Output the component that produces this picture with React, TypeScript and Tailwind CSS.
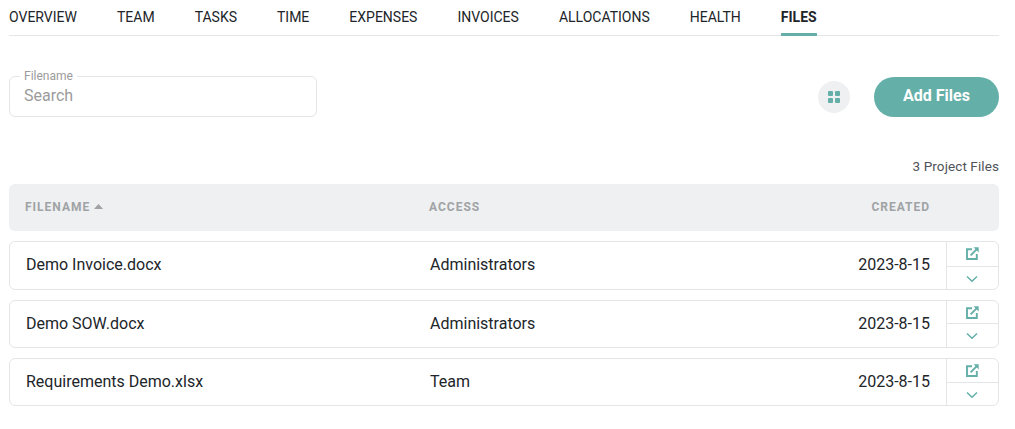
import React from "react";

const tabs = ["OVERVIEW", "TEAM", "TASKS", "TIME", "EXPENSES", "INVOICES", "ALLOCATIONS", "HEALTH", "FILES"];
const rows = [
  { name: "Demo Invoice.docx", access: "Administrators", h: "h-[49px]", top: "h-[25px] pb-[1px]", text: "pb-[1px]" },
  { name: "Demo SOW.docx", access: "Administrators", h: "h-[48px]", top: "h-[23px]", text: "" },
  { name: "Requirements Demo.xlsx", access: "Team", h: "h-[48px]", top: "h-[24px] pb-[1px]", text: "" },
];

function OpenIcon() {
  return (
    <svg width="13" height="13" viewBox="0 0 13 13" fill="none" stroke="#64afa8" strokeWidth="1.9">
      <path d="M6 2.2H1v9.8h9.8V7" />
      <path d="M4.6 8.4 10.8 2.2" />
      <path d="M7.6 .3H12.7V5.4z" fill="#64afa8" stroke="none" />
    </svg>
  );
}

function ChevronIcon() {
  return (
    <svg width="12" height="8" viewBox="0 0 12 8" fill="none" stroke="#64afa8" strokeWidth="1.5">
      <path d="M1 1.5 6 6.2 11 1.5" />
    </svg>
  );
}

export default function App() {
  return (
    <div className="w-[1015px] h-[429px] bg-white px-[9px] pr-4 font-['Roboto',sans-serif] text-[#212529] overflow-hidden">
      <nav className="flex gap-10 h-9 border-b border-[#e4e5e6] text-sm">
        {tabs.map((t) => (
          <div
            key={t}
            className={
              t === "FILES"
                ? "h-9 pt-[7px] font-bold border-b-[3px] border-[#64afa8] text-[#212529]"
                : "h-9 pt-[7px]"
            }
          >
            {t}
          </div>
        ))}
      </nav>

      <div className="flex items-start justify-between mt-[40px] h-[41px]">
        <div className="relative w-[308px] h-[41px] border border-[#e4e5e6] rounded-md pl-[14px] pb-[2px] flex items-center text-base text-[#9b9b9b]">
          Search
          <span className="absolute -top-[8px] left-[10px] bg-white px-1 text-xs leading-[14px] text-[#9b9b9b]">Filename</span>
        </div>
        <div className="flex items-center gap-6 mt-[1px]">
          <div className="w-8 h-8 rounded-full bg-[#eff0f1] grid grid-cols-2 gap-[2px] p-[10px]">
            <span className="bg-[#64afa8] rounded-[1px]" />
            <span className="bg-[#64afa8] rounded-[1px]" />
            <span className="bg-[#64afa8] rounded-[1px]" />
            <span className="bg-[#64afa8] rounded-[1px]" />
          </div>
          <button className="w-[125px] h-10 pb-[2px] rounded-full bg-[#64afa8] text-white font-bold text-base">Add Files</button>
        </div>
      </div>

      <div className="text-right text-[13.5px] leading-[15px] text-[#4f5357] mt-[42px] tracking-[0.1px]">3 Project Files</div>

      <div className="flex items-center h-[47px] pb-[2px] mt-[10px] rounded-md bg-[#eff0f1] text-xs font-bold tracking-[1px] text-[#9fa3a6]">
        <div className="w-[420px] pl-4 flex items-center gap-1">
          FILENAME
          <svg width="9" height="5" viewBox="0 0 9 5" fill="#9fa3a6"><path d="M4.5 0 9 5H0z" /></svg>
        </div>
        <div className="flex-1">ACCESS</div>
        <div className="w-[100px] text-right">CREATED</div>
        <div className="w-[69px]" />
      </div>

      <div className="flex flex-col gap-[10px] mt-[10px]">
        {rows.map((r) => (
          <div key={r.name} className={`flex items-center ${r.h} border border-[#e4e5e6] rounded-md text-base`}>
            <div className={`w-[420px] pl-4 ${r.text}`}>{r.name}</div>
            <div className={`flex-1 ${r.text}`}>{r.access}</div>
            <div className={`w-[100px] text-right ${r.text}`}>2023-8-15</div>
            <div className="w-[52px] ml-4 h-full border-l border-[#e4e5e6] flex flex-col">
              <div className={`${r.top} pr-[1px] border-b border-[#e4e5e6] flex items-center justify-center`}>
                <OpenIcon />
              </div>
              <div className="flex-1 pr-[1px] pt-[1px] flex items-center justify-center">
                <ChevronIcon />
              </div>
            </div>
          </div>
        ))}
      </div>
    </div>
  );
}
